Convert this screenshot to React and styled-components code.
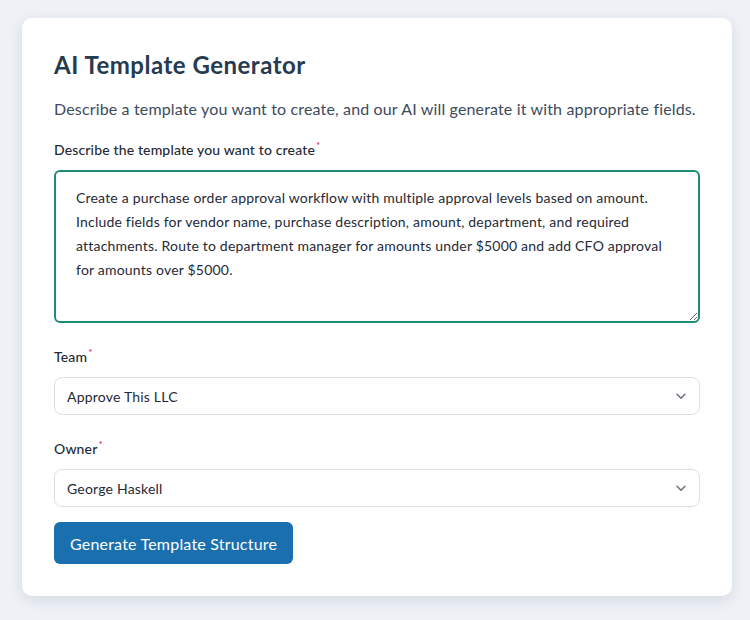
import styled, { createGlobalStyle } from "styled-components";
import { useState } from "react";

const GlobalStyle = createGlobalStyle`
  * { box-sizing: border-box; }
  body {
    margin: 0;
    background: #eef2f7;
    font-family: "Lato", "Open Sans", sans-serif;
    color: #2c3e50;
  }
`;

const Page = styled.div`
  padding: 18px 18px 24px 22px;
  min-height: 620px;
`;

const Card = styled.div`
  width: 710px;
  background: #ffffff;
  border-radius: 10px;
  box-shadow: 0 4px 14px rgba(30, 45, 70, 0.12);
  padding: 32px 32px 32px 32px;
`;

const Title = styled.h1`
  margin: 0 0 17px;
  font-size: 24px;
  font-weight: 700;
  line-height: 30px;
  letter-spacing: 0.5px;
  color: #263a50;
`;

const Subtitle = styled.p`
  margin: 0 0 19px;
  font-size: 16px;
  line-height: 24px;
  letter-spacing: 0.15px;
  white-space: nowrap;
  color: #3d4b5c;
`;

const Field = styled.div`
  display: flex;
  flex-direction: column;
  margin-bottom: ${(props) => props.gap || 24}px;
`;

const Label = styled.label`
  font-size: 14px;
  font-weight: 500;
  line-height: 20px;
  letter-spacing: 0.15px;
  color: #1f2a36;
  margin-bottom: 10px;
`;

const Required = styled.sup`
  color: #e0245e;
  font-size: 10px;
  margin-left: 1px;
  line-height: 0;
`;

const TextArea = styled.textarea`
  width: 100%;
  height: 153px;
  border: 2px solid #1e8b74;
  border-radius: 6px;
  padding: 14px 20px 13px;
  font-family: inherit;
  font-size: 14px;
  line-height: 24px;
  letter-spacing: 0.2px;
  color: #1f2a36;
  resize: vertical;
  outline: none;
`;

const SelectWrap = styled.div`
  position: relative;
`;

const Select = styled.select`
  width: 100%;
  height: 38px;
  appearance: none;
  border: 1px solid #dcdfe4;
  border-radius: 8px;
  background: #ffffff;
  padding: 0 40px 0 12px;
  font-family: inherit;
  font-size: 14px;
  letter-spacing: 0.2px;
  color: #1f2a36;
  outline: none;
`;

const Chevron = styled.svg`
  position: absolute;
  right: 12px;
  top: 50%;
  transform: translateY(-50%);
  pointer-events: none;
`;

const Button = styled.button`
  height: 42px;
  padding: 0 16px;
  border: none;
  border-radius: 6px;
  background: #1a6faf;
  color: #ffffff;
  font-family: inherit;
  font-size: 16px;
  letter-spacing: 0.2px;
  cursor: pointer;
`;

const DESCRIPTION =
  "Create a purchase order approval workflow with multiple approval levels based on amount. Include fields for vendor name, purchase description, amount, department, and required attachments. Route to department manager for amounts under $5000 and add CFO approval for amounts over $5000.";

function Dropdown({ value, options, onChange }) {
  return (
    <SelectWrap>
      <Select value={value} onChange={(e) => onChange(e.target.value)}>
        {options.map((o) => (
          <option key={o} value={o}>
            {o}
          </option>
        ))}
      </Select>
      <Chevron width="14" height="14" viewBox="0 0 16 16" fill="none">
        <path
          d="M3.5 6l4.5 4.5L12.5 6"
          stroke="#6b7280"
          strokeWidth="1.8"
          strokeLinecap="round"
          strokeLinejoin="round"
        />
      </Chevron>
    </SelectWrap>
  );
}

export default function App() {
  const [description, setDescription] = useState(DESCRIPTION);
  const [team, setTeam] = useState("Approve This LLC");
  const [owner, setOwner] = useState("George Haskell");

  return (
    <>
      <GlobalStyle />
      <Page>
        <Card>
          <Title>AI Template Generator</Title>
          <Subtitle>
            Describe a template you want to create, and our AI will generate it
            with appropriate fields.
          </Subtitle>
          <Field gap={24}>
            <Label>
              Describe the template you want to create<Required>*</Required>
            </Label>
            <TextArea
              value={description}
              onChange={(e) => setDescription(e.target.value)}
            />
          </Field>
          <Field gap={24}>
            <Label>
              Team<Required>*</Required>
            </Label>
            <Dropdown
              value={team}
              options={["Approve This LLC"]}
              onChange={setTeam}
            />
          </Field>
          <Field gap={15}>
            <Label>
              Owner<Required>*</Required>
            </Label>
            <Dropdown
              value={owner}
              options={["George Haskell"]}
              onChange={setOwner}
            />
          </Field>
          <Button type="button">Generate Template Structure</Button>
        </Card>
      </Page>
    </>
  );
}
